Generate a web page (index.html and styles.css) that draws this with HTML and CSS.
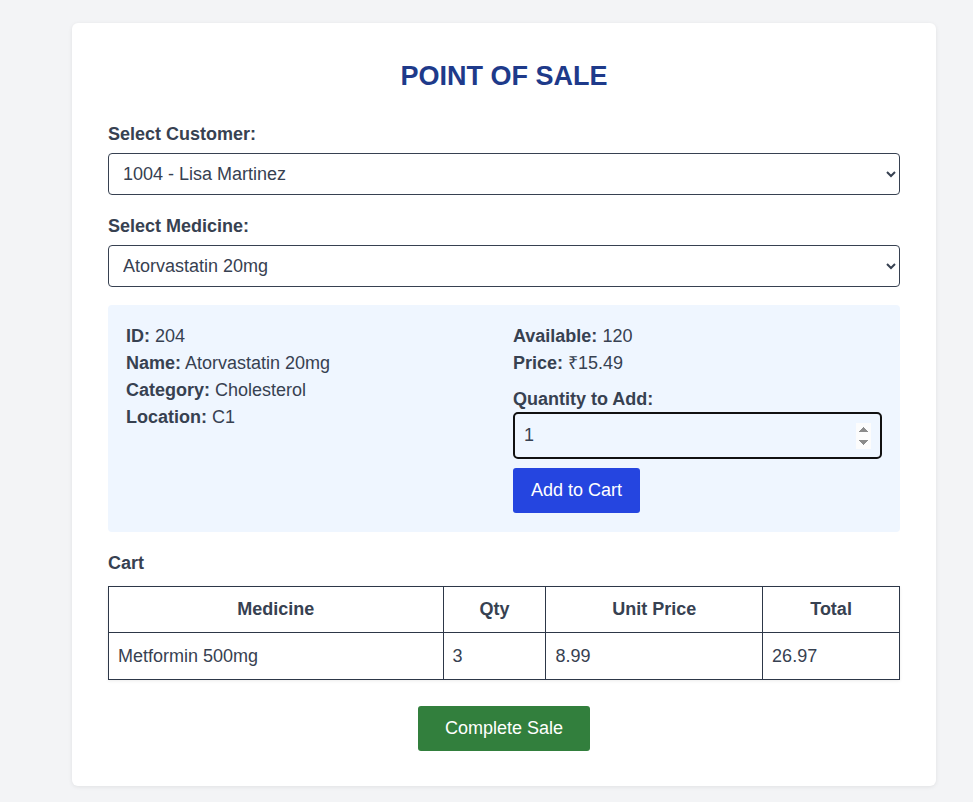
FILE: index.html
```html
<!DOCTYPE html>
<html lang="en">
<head>
<meta charset="utf-8">
<title>Point of Sale</title>
<link rel="stylesheet" href="styles.css">
</head>
<body>
<main class="card">
  <h2 class="title">POINT OF SALE</h2>

  <label class="field-label" for="customer">Select Customer:</label>
  <select id="customer" class="select">
    <option>1004 - Lisa Martinez</option>
  </select>

  <label class="field-label" for="medicine">Select Medicine:</label>
  <select id="medicine" class="select">
    <option>Atorvastatin 20mg</option>
  </select>

  <section class="info">
    <div class="info-col">
      <div class="line"><b>ID:</b> 204</div>
      <div class="line"><b>Name:</b> Atorvastatin 20mg</div>
      <div class="line"><b>Category:</b> Cholesterol</div>
      <div class="line"><b>Location:</b> C1</div>
    </div>
    <div class="info-col">
      <div class="line"><b>Available:</b> 120</div>
      <div class="line"><b>Price:</b> ₹15.49</div>
      <label class="qty-label" for="qty">Quantity to Add:</label>
      <input id="qty" class="qty" type="number" value="1" min="1">
      <div><button class="btn btn-blue">Add to Cart</button></div>
    </div>
  </section>

  <h3 class="cart-title">Cart</h3>
  <table class="cart">
    <colgroup>
      <col class="c-med"><col class="c-qty"><col class="c-unit"><col class="c-total">
    </colgroup>
    <thead>
      <tr><th>Medicine</th><th>Qty</th><th>Unit Price</th><th>Total</th></tr>
    </thead>
    <tbody>
      <tr><td>Metformin 500mg</td><td>3</td><td>8.99</td><td>26.97</td></tr>
    </tbody>
  </table>

  <div class="actions">
    <button class="btn btn-green">Complete Sale</button>
  </div>
</main>
</body>
</html>
```
FILE: styles.css
```css
* { box-sizing: border-box; }

html, body {
  margin: 0;
  padding: 0;
  background: #f3f4f6;
}

body {
  font-family: "Liberation Sans", Arial, sans-serif;
  color: #374151;
  font-size: 18px;
  padding: 23px 0 16px 72px;
}

.card {
  width: 864px;
  background: #ffffff;
  border-radius: 6px;
  box-shadow: 0 1px 4px rgba(0, 0, 0, 0.08);
  padding: 38px 36px 35px;
}

.title {
  margin: 0 0 30px;
  text-align: center;
  font-size: 27px;
  line-height: 31px;
  font-weight: bold;
  color: #1e3a8a;
}

.field-label {
  display: block;
  font-weight: bold;
  font-size: 18px;
  line-height: 24px;
  margin-bottom: 7px;
}

.select {
  display: block;
  width: 100%;
  height: 42px;
  padding: 0 10px;
  font-family: "Liberation Sans", Arial, sans-serif;
  font-size: 18px;
  color: #374151;
  background: #ffffff;
  border: 1px solid #374151;
  border-radius: 4px;
  margin-bottom: 19px;
}

#medicine { margin-bottom: 18px; }

.info {
  background: #eff6ff;
  border-radius: 4px;
  padding: 18px 18px 19px;
  display: grid;
  grid-template-columns: 1fr 1fr;
  column-gap: 18px;
}

.line {
  line-height: 27px;
}

.line b { font-weight: bold; }

.qty-label {
  display: block;
  font-weight: bold;
  line-height: 26px;
  margin-top: 9px;
}

.qty {
  display: block;
  width: 100%;
  height: 47px;
  padding: 0 9px;
  font-family: "Liberation Sans", Arial, sans-serif;
  font-size: 18px;
  color: #374151;
  background: #eff6ff;
  border: 2px solid #111111;
  border-radius: 5px;
  outline: none;
}

.qty::-webkit-inner-spin-button,
.qty::-webkit-outer-spin-button {
  opacity: 1;
  height: 26px;
}

.btn {
  font-family: "Liberation Sans", Arial, sans-serif;
  font-size: 18px;
  line-height: 21px;
  color: #ffffff;
  border: none;
  border-radius: 3px;
  cursor: pointer;
}

.btn-blue {
  margin-top: 9px;
  height: 45px;
  padding: 0 18px;
  background: #2545e0;
}

.cart-title {
  margin: 21px 0 12px;
  font-size: 18px;
  line-height: 21px;
  font-weight: bold;
}

.cart {
  width: 100%;
  border-collapse: collapse;
  box-shadow: 0 1px 3px rgba(0, 0, 0, 0.08);
}

.c-med { width: 335px; }
.c-qty { width: 103px; }
.c-unit { width: 217px; }
.c-total { width: 137px; }

.cart th,
.cart td {
  border: 1px solid #2d3748;
  font-size: 18px;
  line-height: 21px;
  padding: 12px 9px;
}

.cart th {
  text-align: center;
  font-weight: bold;
}

.cart td {
  text-align: left;
  padding-top: 13px;
}

.actions {
  display: flex;
  justify-content: center;
  margin-top: 26px;
}

.btn-green {
  height: 45px;
  padding: 0 27px;
  background: #327f3d;
}
```
